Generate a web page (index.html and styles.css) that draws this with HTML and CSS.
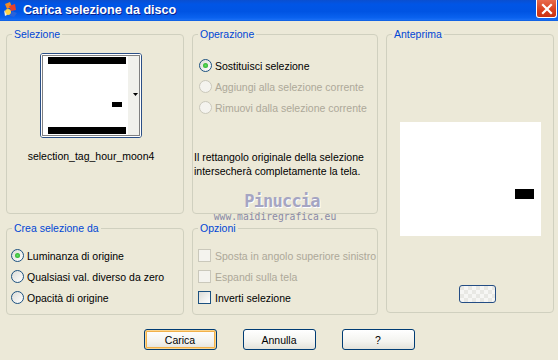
FILE: index.html
```html
<!DOCTYPE html>
<html>
<head>
    <title>Carica selezione da disco</title>
    <link rel="stylesheet" href="styles.css">
</head>
<body>
    <div class="titlebar">
        <svg class="app-icon" width="16" height="17" viewBox="0 0 16 17">
            <path d="M2 3 L7 1 L9 6 L4 8 Z" fill="#f08a24"/>
            <path d="M6 5 L12 3 L13 9 L8 10 Z" fill="#e8402a"/>
            <circle cx="5" cy="11" r="3" fill="#ffd34a"/>
            <path d="M9 10 L14 12 L11 16 L7 15 Z" fill="#2a62d8"/>
            <path d="M1 9 L4 14 L2 15 Z" fill="#f7f2e0"/>
        </svg>
        <span class="title">Carica selezione da disco</span>
        <span class="close">
            <svg width="12" height="12" viewBox="0 0 12 12"><path d="M2 2 L10 10 M10 2 L2 10" stroke="#fff" stroke-width="2.2" stroke-linecap="square"/></svg>
        </span>
    </div>

    <div class="dialog">
        <div class="groups">
            <fieldset class="group sel">
                <legend>Selezione</legend>
                <div class="sel-body">
                    <div class="thumb">
                        <svg width="100" height="83" viewBox="0 0 100 83">
                            <rect x="0" y="0" width="100" height="83" fill="#fff"/>
                            <rect x="87" y="2" width="11" height="79" fill="#f1f1ec"/>
                            <rect x="7" y="3" width="78" height="7" fill="#000"/>
                            <rect x="7" y="73" width="78" height="7" fill="#000"/>
                            <rect x="71" y="48" width="10" height="5" fill="#000"/>
                            <polygon points="92,39 97,39 94.5,42" fill="#000"/>
                            <rect x="1.5" y="1.5" width="97" height="80" fill="none" stroke="#000" stroke-dasharray="1 1"/>
                        </svg>
                    </div>
                    <div class="filename">selection_tag_hour_moon4</div>
                </div>
            </fieldset>

            <fieldset class="group op">
                <legend>Operazione</legend>
                <div class="op-body">
                    <div class="row"><span class="radio checked"></span>Sostituisci selezione</div>
                    <div class="row disabled"><span class="radio"></span>Aggiungi alla selezione corrente</div>
                    <div class="row disabled"><span class="radio"></span>Rimuovi dalla selezione corrente</div>
                    <p class="note">Il rettangolo originale della selezione intersecherà completamente la tela.</p>
                </div>
            </fieldset>

            <fieldset class="group preview">
                <legend>Anteprima</legend>
                <div class="preview-body">
                    <svg class="preview-img" width="141" height="114" viewBox="0 0 141 114">
                        <rect width="141" height="114" fill="#fff"/>
                        <rect x="115" y="67" width="19" height="10" fill="#000"/>
                    </svg>
                    <span class="mini-btn"></span>
                </div>
            </fieldset>

            <fieldset class="group crea">
                <legend>Crea selezione da</legend>
                <div class="list-body">
                    <div class="row"><span class="radio checked"></span>Luminanza di origine</div>
                    <div class="row"><span class="radio"></span>Qualsiasi val. diverso da zero</div>
                    <div class="row"><span class="radio"></span>Opacità di origine</div>
                </div>
            </fieldset>

            <fieldset class="group opt">
                <legend>Opzioni</legend>
                <div class="list-body">
                    <div class="row disabled"><span class="check"></span>Sposta in angolo superiore sinistro</div>
                    <div class="row disabled"><span class="check"></span>Espandi sulla tela</div>
                    <div class="row"><span class="check"></span>Inverti selezione</div>
                </div>
            </fieldset>
        </div>

        <div class="buttons">
            <button class="btn default">Carica</button>
            <button class="btn">Annulla</button>
            <button class="btn">?</button>
        </div>

        <div class="watermark">
            <div class="wm-name">Pinuccia</div>
            <div class="wm-url">www.maidiregrafica.eu</div>
        </div>
    </div>
</body>
</html>
```

FILE: styles.css
```css
body { margin: 0; width: 558px; height: 360px; overflow: hidden; background: #ece9d8;
       font-family: "Liberation Sans", Arial, sans-serif; font-size: 10.5px; color: #000; }

.titlebar { height: 21px; display: flex; align-items: center; padding-left: 3px; position: relative;
            background: linear-gradient(to bottom, #0a4fd0 0%, #0055e6 20%, #0054e3 55%, #0a62ef 85%, #1a6ff5 95%, #0a58d6 100%); }
.app-icon { margin-top: -2px; }
.title { margin-left: 4px; color: #fff; font-weight: bold; font-size: 12.6px; text-shadow: 1px 1px 0 #0a1f8f; margin-top: -2px; }
.close { position: absolute; right: 1px; top: 0; width: 19px; height: 17px; border: 1px solid #fff; border-top: none;
         border-radius: 0 0 3px 3px; background: linear-gradient(#e86a4c, #d8401e 60%, #c93314);
         display: flex; align-items: center; justify-content: center; }

.dialog { position: relative; padding: 7px 4px 0 6px; }
.groups { display: grid; grid-template-columns: 178px 186px 168px; grid-template-rows: 186px 93px;
          column-gap: 8px; row-gap: 8px; }

.group { margin: 0; padding: 0; border: 1px solid #d0d0bf; border-radius: 4px; min-width: 0; }
.group legend { margin-left: 5px; padding: 0 2px; color: #0046d5; line-height: 13px; }
.preview { grid-row: 1 / span 2; grid-column: 3; height: 285px; box-sizing: border-box; }
.crea { grid-row: 2; grid-column: 1; }
.opt { grid-row: 2; grid-column: 2; }

.sel-body { display: flex; flex-direction: column; align-items: center; padding: 12px 10px 0 2px; }
.thumb { width: 100px; height: 83px; border: 1px solid #2b4f86; border-radius: 3px; overflow: hidden; }
.thumb svg { display: block; }
.filename { margin-top: 12px; line-height: 13px; }

.op-body { padding: 14px 6px 0 6px; }
.row { display: flex; align-items: center; height: 21px; gap: 3px; white-space: nowrap; }
.row.disabled { color: #aca899; }
.note { margin: 32px 0 0 -5px; line-height: 14px; }

.list-body { padding: 10px 4px 0 4px; }
.opt .list-body { padding: 10px 0 0 5px; }
.opt .row { gap: 4px; }

.radio { width: 11px; height: 11px; border: 1px solid #1c5180; border-radius: 50%; position: relative;
         background: linear-gradient(135deg, #dcdcd7, #ffffff); flex: none; }
.radio.checked::after { content: ""; position: absolute; left: 3px; top: 3px; width: 5px; height: 5px;
                        border-radius: 50%; background: radial-gradient(#5fe05f, #21a121); }
.disabled .radio { border-color: #cac8bb; background: #f4f3ee; }

.check { width: 11px; height: 11px; border: 1px solid #1c5180; background: linear-gradient(135deg, #dcdcd7, #ffffff); flex: none; }
.disabled .check { border-color: #cac8bb; background: #f4f3ee; }

.preview-body { display: flex; flex-direction: column; align-items: center; padding-top: 81px; }
.preview-img { display: block; }
.mini-btn { margin-top: 49px; margin-left: 15px; width: 35px; height: 16px; border: 1px solid #244d84; border-radius: 3px;
            background: repeating-conic-gradient(#f6f6f4 0 25%, #e8e8e4 0 50%) 0 0 / 8px 8px; }

.buttons { display: flex; justify-content: center; gap: 26px; margin-top: 14px; padding-right: 2px; }
.btn { width: 73px; height: 21px; border: 1px solid #003c74; border-radius: 3px; padding: 0;
       font-family: "Liberation Sans", Arial, sans-serif; font-size: 10.5px; color: #000;
       background: linear-gradient(#ffffff, #f3f3ef 60%, #e3e2da); }
.btn.default { box-shadow: inset 0 0 0 1px #fbd68f, inset 0 0 0 2px #f2b14a; }

.watermark { position: absolute; left: 213px; top: 170px; width: 124px; text-align: center; pointer-events: none; }
.wm-name { margin-left: 14px; font-family: "DejaVu Sans Mono", monospace; font-weight: bold; font-size: 17px; color: #a5a5c2;
           text-shadow: 1px 1px 0 #ffffff; letter-spacing: -0.8px; line-height: 20px; }
.wm-url { font-family: "DejaVu Sans Mono", monospace; font-size: 9.7px; color: #8a8aa6; line-height: 12px; }
```
